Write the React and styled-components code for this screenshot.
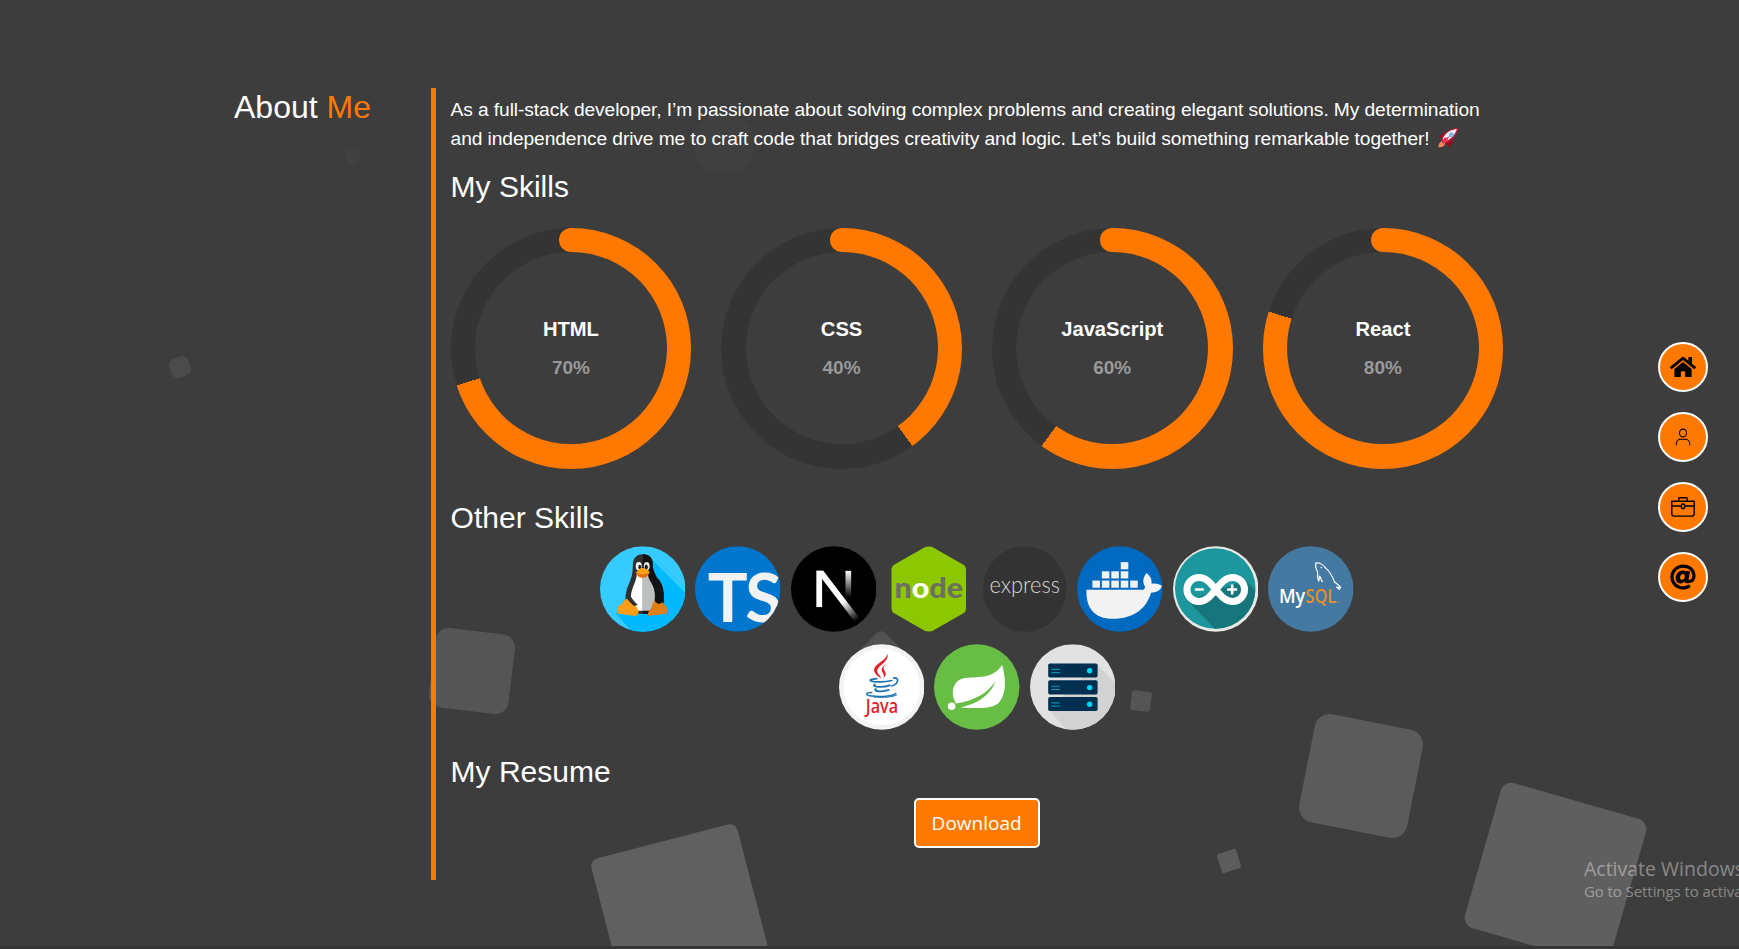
import React from "react";
import styled, { createGlobalStyle } from "styled-components";
import { FaHome, FaAt } from "react-icons/fa";

const ORANGE = "#ff7900";

const GlobalStyle = createGlobalStyle`
  * { box-sizing: border-box; }
  html, body { margin: 0; padding: 0; background: #3d3d3d; overflow: hidden; }
  body { font-family: "Liberation Sans", Arial, sans-serif; color: #fff; }
  h1, h2, p { margin: 0; font-weight: 400; }
`;

const Page = styled.div`
  position: relative;
  width: 1739px;
  height: 949px;
  overflow: hidden;
  background: #3d3d3d;
  border-bottom: 3px solid #363435;
`;

const Square = styled.span`
  position: absolute;
  left: ${(p) => p.$x - p.$size / 2}px;
  top: ${(p) => p.$y - p.$size / 2}px;
  width: ${(p) => p.$size}px;
  height: ${(p) => p.$size}px;
  border-radius: ${(p) => p.$radius}px;
  background: ${(p) => p.$color};
  transform: rotate(${(p) => p.$angle}deg);
`;

const Layout = styled.main`
  position: relative;
  display: flex;
  padding: 88px 0 0 174px;
`;

const TitleColumn = styled.header`
  width: 257px;
  text-align: center;
`;

const PageTitle = styled.h1`
  font-size: 32px;
  line-height: 38px;
  em { font-style: normal; color: ${ORANGE}; }
`;

const Content = styled.section`
  width: 1073px;
  height: 792px;
  padding: 7px 0 0 14.6px;
  border-left: 5px solid ${ORANGE};
`;

const Intro = styled.p`
  width: 1052.6px;
  font-size: 19.2px;
  line-height: 29px;
  letter-spacing: -0.09px;
  white-space: nowrap;
  svg { width: 20px; height: 20px; vertical-align: -3px; margin-left: 3px; }
`;

const Heading = styled.h2`
  margin-top: ${(p) => p.$top}px;
  font-size: 30px;
  line-height: 36px;
`;

const RingGrid = styled.div`
  display: grid;
  grid-template-columns: repeat(4, 1fr);
  gap: 30px;
  width: 1052.6px;
  margin-top: 23px;
`;

const Ring = styled.div`
  position: relative;
  aspect-ratio: 1;
  padding: 24.4px;
  border-radius: 50%;
  background: conic-gradient(${ORANGE} ${(p) => p.$value}%, #343434 0);
  &::before {
    content: "";
    position: absolute;
    top: 0;
    left: calc(50% - 12px);
    width: 24.4px;
    height: 24.4px;
    border-radius: 50%;
    background: ${ORANGE};
  }
`;

const RingFace = styled.div`
  display: flex;
  flex-direction: column;
  align-items: center;
  justify-content: center;
  gap: 17px;
  height: 100%;
  border-radius: 50%;
  background: #3d3d3d;
  font-weight: 700;
`;

const RingName = styled.span`
  font-size: 20.2px;
  line-height: 22px;
`;

const RingValue = styled.span`
  font-size: 19px;
  line-height: 22px;
  color: #999;
`;

const IconRows = styled.div`
  display: flex;
  flex-direction: column;
  align-items: center;
  gap: 12px;
  width: 1052.6px;
  margin-top: 10px;
`;

const IconRow = styled.div`
  display: flex;
  gap: 10px;
  svg { display: block; width: 85.5px; height: 86px; }
`;

const ButtonRow = styled.div`
  display: flex;
  justify-content: center;
  width: 1052px;
  margin-top: 8px;
`;

const DownloadButton = styled.button`
  width: 126px;
  height: 50px;
  padding: 1px 0 0;
  border: 2px solid #fff;
  border-radius: 5px;
  background: ${ORANGE};
  color: #fff;
  font: 400 19px "Open Sans", sans-serif;
  white-space: nowrap;
`;

const SideNav = styled.nav`
  position: absolute;
  top: 342px;
  right: 31px;
  display: flex;
  flex-direction: column;
  gap: 20px;
`;

const NavButton = styled.a`
  display: flex;
  align-items: center;
  justify-content: center;
  width: 50px;
  height: 50px;
  border: 2px solid #fff;
  border-radius: 50%;
  background: ${ORANGE};
  color: #000;
`;

const Watermark = styled.div`
  position: absolute;
  left: 1584px;
  top: 856px;
  color: rgba(255, 255, 255, 0.4);
  font-family: "Open Sans", sans-serif;
  white-space: nowrap;
`;

const WatermarkTitle = styled.div`
  font-size: 19.5px;
  line-height: 26px;
`;

const WatermarkText = styled.div`
  font-size: 15px;
  line-height: 18px;
  letter-spacing: -0.08px;
`;

const squares = [
  { x: 352.7, y: 156.3, size: 15, radius: 7, angle: 0, color: "#414141" },
  { x: 724, y: 143.5, size: 60, radius: 28, angle: 0, color: "#404040" },
  { x: 180, y: 367.3, size: 20, radius: 6, angle: -22, color: "#4b4b4b" },
  { x: 472, y: 670.8, size: 80, radius: 13, angle: 7, color: "#555555" },
  { x: 881, y: 664, size: 50, radius: 6, angle: 45, color: "#515151" },
  { x: 1141.2, y: 701.2, size: 20, radius: 3, angle: 7, color: "#555555" },
  { x: 681.4, y: 914.8, size: 151, radius: 8, angle: -14.5, color: "#606060" },
  { x: 1229, y: 861, size: 20, radius: 2, angle: -18, color: "#5c5c5c" },
  { x: 1361.2, y: 776, size: 110, radius: 15, angle: 11.2, color: "#5b5b5b" },
  { x: 1555.8, y: 873.2, size: 151, radius: 11, angle: 16, color: "#5f5f5f" },
];

const skills = [
  { name: "HTML", value: 70 },
  { name: "CSS", value: 40 },
  { name: "JavaScript", value: 60 },
  { name: "React", value: 80 },
];

const Rocket = () => (
  <svg viewBox="0 0 36 36">
    <path d="M1 17l8-7 16 1 1 16-7 8s0-5-4-12S1 17 1 17z" fill="#a0041e" />
    <path d="M.97 35s-.04-7 3-9.500C7 22 13 25 12.500 28.500S9 35 .97 35z" fill="#ff8354" />
    <path d="M36 0S23 0 12 10c-6 5-6 14-4 16s11 2 16-4C36 13 36 0 36 0z" fill="#be1931" />
    <path d="M34 2S21 3 13 12c-4 4-5 8-4 12 4 1 8 0 12-4C31 14 34 2 34 2z" fill="#eef1f5" />
    <path d="M8 26s0-5 4-9l6 1-1 5-5 3z" fill="#ef2f5b" />
    <circle cx="24" cy="12" r="4.500" fill="#7cbcea" />
    <path d="M8 28s0-4 1-5 11-8.500 11.500-8-7 11-8 12S8 28 8 28z" fill="#f02f5b" />
  </svg>
);

const LinuxIcon = () => (
  <svg viewBox="0 0 86 86">
    <defs>
      <clipPath id="linuxDisc"><circle cx="43" cy="43" r="43" /></clipPath>
    </defs>
    <g clipPath="url(#linuxDisc)">
      <rect width="86" height="86" fill="#36cbff" />
      <path d="M50 11L90 51V90H36L16 68z" fill="#00b9ff" />
      <path d="M43 8c-7 0-10 5-10 11 0 8-1 12-4 19-4 9-4 16-2 24l7 6h18l10-9c3 0 3-3 2-6 0-7-1-13-4-18-5-7-7-12-7-17 0-6-3-10-10-10z" fill="#303030" />
      <path d="M43 8v60h9l8-10c3 0 5-2 3-7 0-6-1-11-4-16-4-7-6-11-6-17 0-6-3-10-10-10z" fill="#111" />
      <path d="M43 28h-6c0 7-5 13-6 22 0 6 1 11 5 15h7z" fill="#fff" />
      <path d="M43 28h5c1 7 6 10 8 20 1 7-2 13-6 17h-7z" fill="#bcc0c0" />
      <path d="M27 53c4 0 7 5 11 10 2 4 0 7-4 7l-15-2c-3-1-1-4-1-6-1-3 3-2 5-5 1-2 2-4 4-4z" fill="#ff9d16" />
      <path d="M56 51l-5 12c-3 3-4 7-1 7l16-2c3-1 1-4 1-7-2-2-4-4-5-7z" fill="#df7f15" />
      <path d="M28 44c-2 5-1 9 1 11l5 5 4-1c-3-3-8-8-10-15z" fill="#303030" />
      <path d="M59 33c5 7 6 15 5 21-1 5-8 5-9 0 1-7-1-14-4-20z" fill="#141414" />
      <ellipse cx="39" cy="20" rx="3" ry="4.200" fill="#fff" />
      <ellipse cx="47" cy="20" rx="3" ry="4.200" fill="#ddd" />
      <ellipse cx="40" cy="21" rx="1.500" ry="2.400" fill="#222" />
      <ellipse cx="46.500" cy="21" rx="1.500" ry="2.400" fill="#111" />
      <path d="M36 27c2-3 4-5 7-5s5 2 7 4c-2 4-5 5-7 5s-5-1-7-4z" fill="#ffa21a" />
      <path d="M36 26c3 3 11 3 14 0-1 4-4 6-7 6s-6-2-7-6z" fill="#e1720e" />
    </g>
  </svg>
);

const TypeScriptIcon = () => (
  <svg viewBox="0 0 86 86">
    <defs>
      <clipPath id="tsDisc"><circle cx="43" cy="43" r="43" /></clipPath>
    </defs>
    <g clipPath="url(#tsDisc)" fontFamily="Lato, sans-serif" fontWeight="700" fontSize="67" fill="#f2f2f2">
      <rect width="86" height="86" fill="#0077cf" />
      <text y="76.300"><tspan x="12.800">T</tspan><tspan x="50.500">S</tspan></text>
    </g>
  </svg>
);

const NextIcon = () => (
  <svg viewBox="0 0 86 86">
    <defs>
      <linearGradient id="nextDiagonal" gradientUnits="userSpaceOnUse" x1="52" y1="56" x2="66" y2="75">
        <stop offset="0" stopColor="#fff" />
        <stop offset="1" stopColor="#fff" stopOpacity="0" />
      </linearGradient>
      <linearGradient id="nextStem" x1="0" y1="0" x2="0" y2="1">
        <stop offset="0" stopColor="#fff" />
        <stop offset="1" stopColor="#fff" stopOpacity="0" />
      </linearGradient>
    </defs>
    <circle cx="43" cy="43" r="43" fill="#000" />
    <rect x="25.500" y="24.700" width="5.800" height="36.500" fill="#fff" />
    <path d="M25.500 24.700H32.500L69 72.500L64.500 76.500L29 30z" fill="url(#nextDiagonal)" />
    <rect x="54.800" y="24.700" width="5.700" height="27" fill="url(#nextStem)" />
  </svg>
);

const NodeIcon = () => (
  <svg viewBox="0 0 86 86">
    <path d="M38 1.500q5-2.600 10 0L77 18q3.500 2 3.500 6v38q0 4-3.500 6L48 84.500q-5 2.600-10 0L9 68q-3.500-2-3.500-6V24q0-4 3.500-6z" fill="#8cc700" />
    <text x="8.500" y="52" fontFamily="Lato, sans-serif" fontWeight="900" fontSize="28" fill="#6d6f62" textLength="69" lengthAdjust="spacingAndGlyphs">
      n<tspan fill="#fff">o</tspan>de
    </text>
  </svg>
);

const ExpressIcon = () => (
  <svg viewBox="0 0 86 86">
    <ellipse cx="43" cy="43" rx="42" ry="43" fill="#333" />
    <text x="7.500" y="47.300" fontFamily="Lato, sans-serif" fontWeight="300" fontSize="24" fill="#d6d6d6" textLength="71" lengthAdjust="spacingAndGlyphs">express</text>
  </svg>
);

const DockerIcon = () => (
  <svg viewBox="0 0 86 86">
    <circle cx="43" cy="43" r="43" fill="#0069c0" />
    <g fill="#f2f2f2">
      {[[15.500, 34.500], [25, 34.500], [34.500, 34.500], [44, 34.500], [53.500, 34.500], [25, 25.200], [34.500, 25.200], [44, 25.200], [44, 16]].map(([x, y]) => (
        <rect key={`${x}-${y}`} x={x} y={y} width="7.600" height="7.200" />
      ))}
      <path d="M9.500 43.800H67c1-1 1.500-2 1.500-3-3-5-2-10 1.500-14 4 3 5.500 7 5 11 4-1 8 0 10.500 2-1.500 5-6 7-11 7C70 62 58 73 36 73 17 73 9 62 9.500 43.800z" />
    </g>
  </svg>
);

const ArduinoIcon = () => (
  <svg viewBox="0 0 86 86">
    <defs>
      <clipPath id="arduinoDisc"><circle cx="42.500" cy="42.500" r="40.500" /></clipPath>
    </defs>
    <circle cx="43" cy="43" r="43" fill="#e9e9e5" />
    <g clipPath="url(#arduinoDisc)">
      <rect width="86" height="86" fill="#1b979d" />
      <path d="M15 55L45 86H86V48L73 34z" fill="#16767b" />
    </g>
    <path d="M43 43.500C37 36 33 31.500 26 31.500a12 12 0 0 0 0 24C33 55.500 37 51 43 43.500S53 31.500 60 31.500a12 12 0 0 1 0 24C53 55.500 49 51 43 43.500z" fill="none" stroke="#fff" strokeWidth="7" />
    <path d="M22 43.500h9M54.500 43.500h10M59.500 38.500v10" fill="none" stroke="#fff" strokeWidth="2.600" />
  </svg>
);

const MySqlIcon = () => (
  <svg viewBox="0 0 86 86">
    <circle cx="43" cy="43" r="43" fill="#4479a1" />
    <text x="11" y="57" fontFamily="Open Sans, sans-serif" fontSize="20.500" fill="#fff" fontWeight="600" textLength="26.500" lengthAdjust="spacingAndGlyphs">My</text>
    <text x="37.600" y="57" fontFamily="Open Sans, sans-serif" fontSize="20.500" fill="#e48e2c" fontWeight="600" textLength="31" lengthAdjust="spacingAndGlyphs">SQL</text>
    <path d="M69 56h4" stroke="#c58a48" strokeWidth="0.800" />
    <path d="M55 36c-2-2-2-5-3-6-1 2 0 4-1 5-2-3-1-6-1-9-1-2-3-4-2-9 4-1 8 2 10 5 4 3 7 9 9 14 2 2 5 3 6 6l-4-1c1 1 3 2 3 3" fill="none" stroke="#fff" strokeWidth="1.200" strokeLinejoin="round" />
    <path d="M53 21l1 1" stroke="#fff" strokeWidth="1.200" />
  </svg>
);

const JavaIcon = () => (
  <svg viewBox="0 0 86 86">
    <circle cx="43" cy="43" r="43" fill="#f3f3f3" />
    <circle cx="43" cy="43" r="38.500" fill="#fff" />
    <path d="M48.500 9.500c3 8-11 12-10 18 .5 3 3 4 4 7-5-3-8-6-7-10 2-6 12-8 13-15z" fill="#e32227" />
    <path d="M53 18c-6 1-9 4-8 7s4 5 0 9c1-5-3-6-2-9 1-4 5-6 10-7z" fill="#e32227" />
    <g fill="none" stroke="#1e73b4" strokeLinecap="round">
      <path d="M38 34.500c-5 .5-8 1.500-6 2.500 4 1.500 15 1 21-.5" strokeWidth="1.700" />
      <path d="M55 34c6-1 5 6-2 8" strokeWidth="1.700" />
      <path d="M36 40.500c-4 3 10 3 15 .8" strokeWidth="1.900" />
      <path d="M37 45c-3 3 8 3 13 1" strokeWidth="1.900" />
      <path d="M33 48.500c-7 0-7 3 0 3.600 8 .8 22 .4 24-2.600" strokeWidth="1.500" />
      <path d="M35 53c8 1 20 .3 23-2" strokeWidth="1" />
    </g>
    <text x="27" y="69.500" fontFamily="Open Sans, sans-serif" fontSize="19" fontWeight="600" fill="#e32227" textLength="32.500" lengthAdjust="spacingAndGlyphs">Java</text>
  </svg>
);

const SpringIcon = () => (
  <svg viewBox="0 0 86 86">
    <circle cx="43" cy="43" r="43" fill="#68bd45" />
    <path d="M68.500 20.500c3.500 12 4.500 26-1 35-5 9-16 9.500-41 8C44 60 57 51 62 37 54 49 41 57 22 59.500 16 49 19 36 31 34c11-2 28 2 37.500-13.500z" fill="#fff" />
    <circle cx="17.700" cy="62.300" r="3.800" fill="#fff" />
  </svg>
);

const ServerIcon = () => (
  <svg viewBox="0 0 86 86">
    <defs>
      <clipPath id="serverDisc"><circle cx="43" cy="43" r="43" /></clipPath>
    </defs>
    <g clipPath="url(#serverDisc)">
      <rect width="86" height="86" fill="#e2e2e2" />
      <path d="M67 20L90 43V90H40L19 66z" fill="#d2d2d2" />
      {[19.300, 36.300, 53].map((y) => (
        <g key={y}>
          <rect x="18.300" y={y} width="49.700" height="14.200" rx="1.700" fill="#002f4f" />
          <path d={`M21.500 ${y + 6}h8.500M21.500 ${y + 9.200}h8.500`} stroke="#00a0bd" strokeWidth="1" />
          <circle cx="60" cy={y + 7.300} r="2.700" fill="#00d7f3" />
        </g>
      ))}
    </g>
  </svg>
);

const PersonIcon = () => (
  <svg width="16" height="18" viewBox="0 0 16 18" fill="none" stroke="#000" strokeWidth="1.100">
    <ellipse cx="8" cy="5" rx="3.500" ry="3.900" />
    <path d="M1.300 17.300v-1.500C1.300 13 3.500 11.300 6 11.300h4c2.500 0 4.700 1.700 4.700 4.500v1.500" />
  </svg>
);

const BriefcaseIcon = () => (
  <svg width="24" height="20" viewBox="0 0 24 20" fill="none" stroke="#000" strokeWidth="1.400">
    <path d="M.8 4.200h22.400v12.500q0 2.400-2.400 2.400H3.200Q.8 19.100.8 16.700z" strokeLinejoin="round" />
    <path d="M7.700 4V1.900q0-1.100 1.100-1.100h6.400q1.100 0 1.100 1.100V4M.8 9h9.500M13.700 9h9.500" />
    <rect x="10.400" y="7" width="3.200" height="4.500" rx="1.300" />
  </svg>
);

export default function App() {
  return (
    <>
      <GlobalStyle />
      <Page>
        {squares.map((s) => (
          <Square key={s.x} $x={s.x} $y={s.y} $size={s.size} $radius={s.radius} $angle={s.angle} $color={s.color} />
        ))}
        <Layout>
          <TitleColumn>
            <PageTitle>About <em>Me</em></PageTitle>
          </TitleColumn>
          <Content>
            <Intro>
              As a full-stack developer, I’m passionate about solving complex problems and creating elegant solutions. My determination
              <br />
              and independence drive me to craft code that bridges creativity and logic. Let’s build something remarkable together! <Rocket />
            </Intro>
            <Heading $top={16}>My Skills</Heading>
            <RingGrid>
              {skills.map((s) => (
                <Ring key={s.name} $value={s.value}>
                  <RingFace>
                    <RingName>{s.name}</RingName>
                    <RingValue>{s.value}%</RingValue>
                  </RingFace>
                </Ring>
              ))}
            </RingGrid>
            <Heading $top={31}>Other Skills</Heading>
            <IconRows>
              <IconRow>
                <LinuxIcon />
                <TypeScriptIcon />
                <NextIcon />
                <NodeIcon />
                <ExpressIcon />
                <DockerIcon />
                <ArduinoIcon />
                <MySqlIcon />
              </IconRow>
              <IconRow>
                <JavaIcon />
                <SpringIcon />
                <ServerIcon />
              </IconRow>
            </IconRows>
            <Heading $top={24}>My Resume</Heading>
            <ButtonRow>
              <DownloadButton>Download</DownloadButton>
            </ButtonRow>
          </Content>
        </Layout>
        <SideNav>
          <NavButton><FaHome size={26} /></NavButton>
          <NavButton><PersonIcon /></NavButton>
          <NavButton><BriefcaseIcon /></NavButton>
          <NavButton><FaAt size={26} /></NavButton>
        </SideNav>
        <Watermark>
          <WatermarkTitle>Activate Windows</WatermarkTitle>
          <WatermarkText>Go to Settings to activate Windows.</WatermarkText>
        </Watermark>
      </Page>
    </>
  );
}
